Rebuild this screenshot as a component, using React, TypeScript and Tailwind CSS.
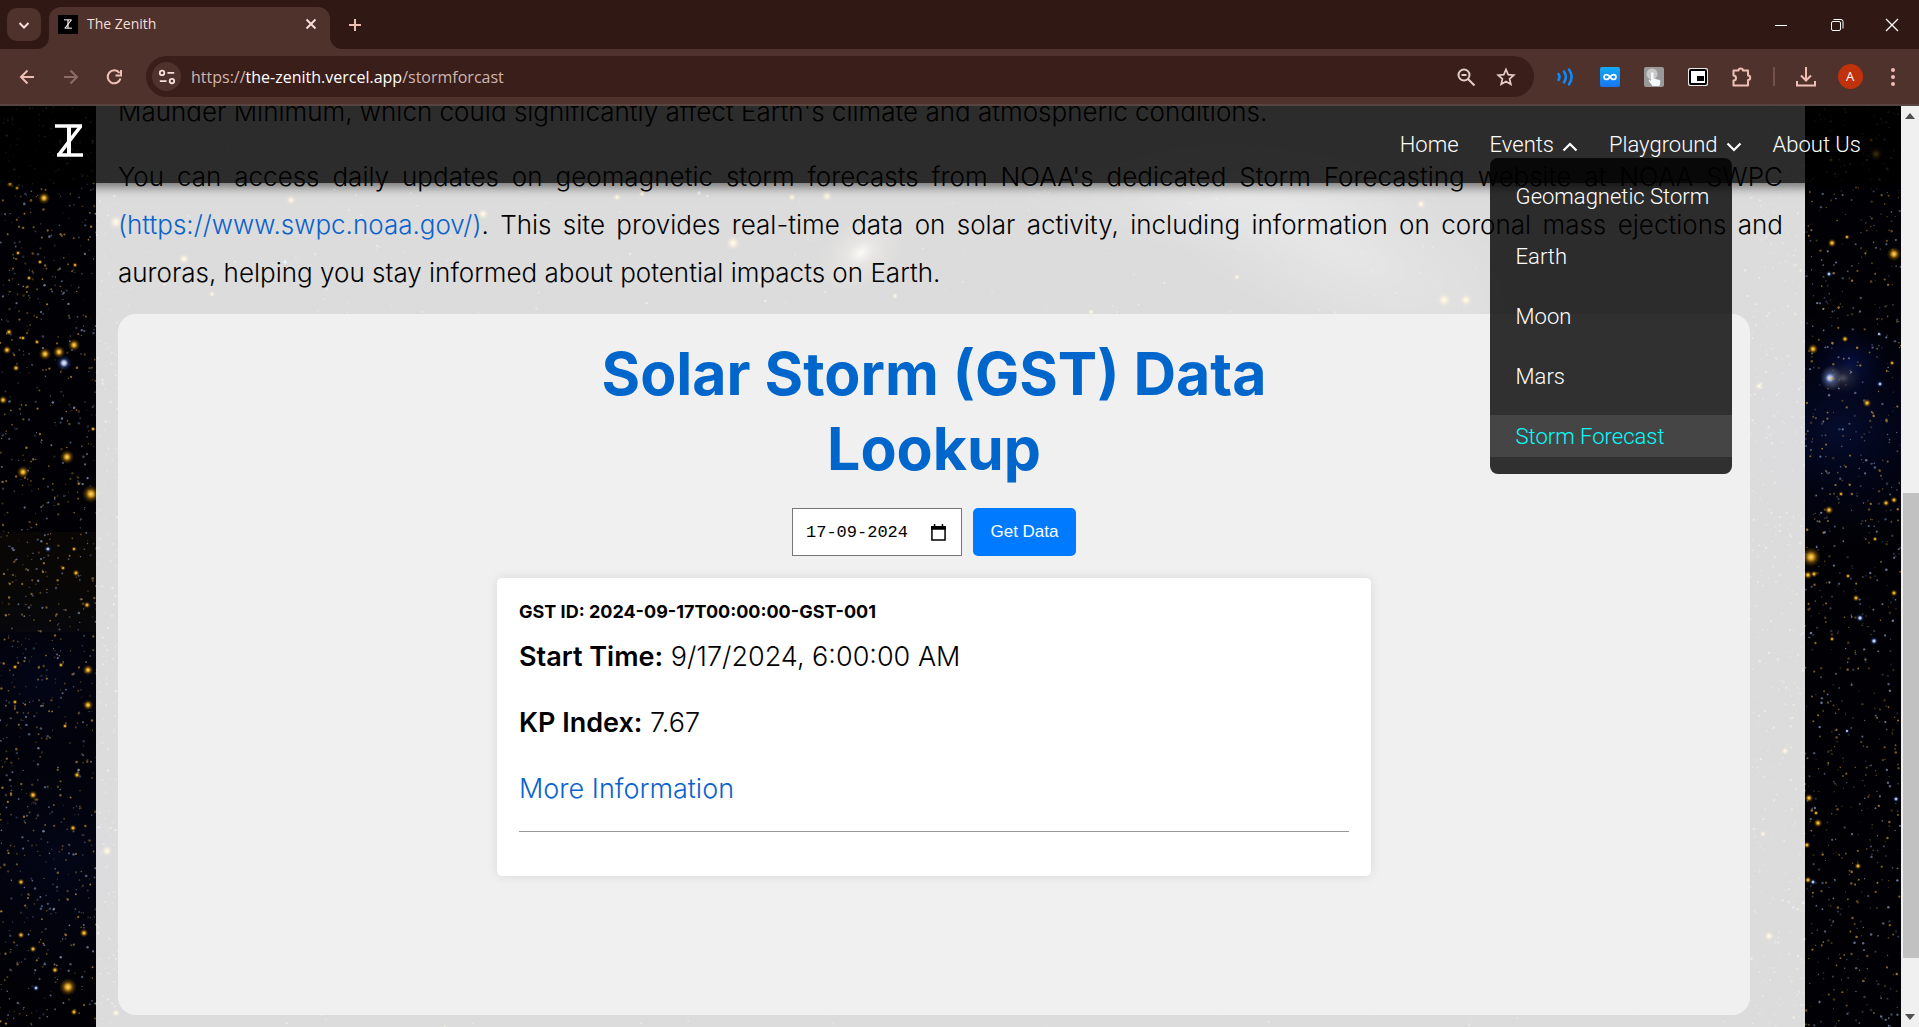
import type { ReactNode } from "react";

type Star = [x: number, y: number, r: number, tint: "gold" | "blue"];

const BRIGHT_STARS: Star[] = [
  [10, 184, 4, "gold"], [17, 188, 3, "gold"], [44, 198, 7, "gold"], [18, 253, 3, "gold"], [40, 262, 3, "gold"],
  [75, 265, 3, "gold"], [29, 278, 3, "gold"], [9, 332, 4, "gold"], [23, 338, 3, "gold"], [37, 342, 3, "gold"],
  [7, 350, 5, "gold"], [45, 354, 7, "gold"], [59, 352, 7, "gold"], [74, 345, 7, "gold"], [64, 363, 9, "blue"],
  [16, 368, 4, "gold"], [3, 400, 5, "gold"], [93, 429, 3, "gold"], [67, 457, 8, "gold"], [23, 472, 7, "gold"],
  [91, 494, 10, "gold"], [48, 549, 4, "blue"], [74, 549, 3, "gold"], [63, 568, 3, "gold"], [76, 573, 4, "gold"],
  [87, 605, 4, "gold"], [15, 667, 3, "gold"], [88, 670, 6, "gold"], [61, 665, 3, "gold"], [15, 702, 3, "gold"],
  [88, 705, 6, "gold"], [65, 726, 3, "gold"], [77, 775, 4, "gold"], [33, 795, 5, "gold"], [73, 828, 4, "gold"],
  [107, 851, 7, "gold"], [21, 882, 4, "gold"], [21, 935, 4, "gold"], [33, 949, 4, "gold"], [84, 933, 5, "gold"],
  [55, 970, 4, "gold"], [68, 987, 10, "gold"], [36, 988, 4, "blue"], [74, 1012, 4, "gold"], [116, 1013, 5, "gold"],
  [116, 222, 9, "gold"], [184, 259, 7, "gold"], [212, 294, 4, "gold"], [291, 200, 6, "gold"], [483, 214, 7, "gold"],
  [285, 262, 4, "blue"], [617, 197, 5, "gold"], [642, 194, 4, "gold"], [792, 197, 5, "gold"], [827, 196, 7, "gold"],
  [733, 243, 9, "gold"], [699, 193, 4, "blue"], [1444, 300, 9, "gold"], [1466, 300, 8, "gold"], [1237, 277, 4, "gold"],
  [1421, 204, 6, "gold"], [760, 281, 5, "gold"], [1091, 312, 4, "gold"], [895, 296, 4, "gold"],
  [1876, 154, 8, "gold"], [1871, 140, 3, "gold"], [1831, 160, 3, "gold"], [1847, 237, 3, "gold"], [1832, 243, 5, "gold"],
  [1894, 254, 8, "gold"], [1829, 274, 4, "blue"], [1845, 339, 4, "gold"], [1813, 349, 6, "gold"], [1892, 363, 3, "gold"],
  [1879, 334, 3, "blue"], [1880, 384, 4, "blue"], [1867, 403, 5, "gold"], [1841, 494, 3, "gold"], [1829, 510, 5, "gold"],
  [1886, 503, 4, "gold"], [1894, 500, 4, "gold"], [1875, 539, 3, "gold"], [1811, 557, 11, "gold"], [1808, 575, 5, "gold"],
  [1814, 574, 4, "gold"], [1848, 576, 3, "gold"], [1894, 593, 4, "gold"], [1856, 598, 4, "gold"], [1860, 618, 5, "blue"],
  [1874, 641, 5, "blue"], [1832, 639, 3, "gold"], [1847, 731, 3, "blue"], [1896, 799, 4, "blue"], [1809, 798, 5, "gold"],
  [1818, 823, 5, "gold"], [1816, 813, 3, "gold"], [1807, 845, 4, "gold"], [1858, 866, 4, "gold"], [1808, 880, 4, "gold"],
  [1813, 882, 4, "blue"], [1785, 751, 5, "gold"], [1763, 834, 4, "gold"], [1769, 936, 6, "gold"], [1759, 386, 5, "gold"],
];

function scatter(count: number, seed: number) {
  let s = seed;
  const next = () => {
    s = (s * 1664525 + 1013904223) % 4294967296;
    return s / 4294967296;
  };
  return Array.from({ length: count }, () => {
    const band = next();
    const x = band < 0.3 ? next() * 118 : band < 0.62 ? 1750 + next() * 151 : next() * 1901;
    const y = 106 + next() * 921;
    return { x, y, r: 0.5 + next() * 0.8, gold: next() > 0.45, o: 0.25 + next() * 0.6 };
  });
}

const FAINT_STARS = scatter(4200, 77);

function Starfield() {
  return (
    <svg className="absolute inset-0 size-full" viewBox="0 106 1901 921" preserveAspectRatio="xMidYMid slice" aria-hidden="true">
      <defs>
        <radialGradient id="gold">
          <stop offset="0" stopColor="#ffe07a" />
          <stop offset="0.3" stopColor="#cf9418" />
          <stop offset="0.6" stopColor="#8a5d08" stopOpacity="0.5" />
          <stop offset="1" stopColor="#5a3c00" stopOpacity="0" />
        </radialGradient>
        <radialGradient id="blue">
          <stop offset="0" stopColor="#ffffff" />
          <stop offset="0.3" stopColor="#95a4cc" />
          <stop offset="0.55" stopColor="#2a4488" stopOpacity="0.5" />
          <stop offset="1" stopColor="#0a1c5a" stopOpacity="0" />
        </radialGradient>
        <radialGradient id="haze">
          <stop offset="0" stopColor="#0a1a60" stopOpacity="0.6" />
          <stop offset="1" stopColor="#000430" stopOpacity="0" />
        </radialGradient>
        <radialGradient id="cloud">
          <stop offset="0" stopColor="#ffffff" stopOpacity="0.5" />
          <stop offset="0.5" stopColor="#d8def0" stopOpacity="0.25" />
          <stop offset="1" stopColor="#9aa6c8" stopOpacity="0" />
        </radialGradient>
        <radialGradient id="warm">
          <stop offset="0" stopColor="#fff4d8" stopOpacity="0.9" />
          <stop offset="0.3" stopColor="#c8b080" stopOpacity="0.4" />
          <stop offset="1" stopColor="#806020" stopOpacity="0" />
        </radialGradient>
      </defs>
      <rect y="106" width="1901" height="921" fill="#010105" />
      <rect y="532" width="130" height="100" fill="#080706" />
      <ellipse cx="40" cy="680" rx="110" ry="100" fill="url(#haze)" opacity="0.35" />
      <ellipse cx="60" cy="860" rx="150" ry="150" fill="url(#haze)" opacity="0.35" />
      <ellipse cx="1840" cy="430" rx="130" ry="120" fill="url(#haze)" opacity="0.75" />
      <ellipse cx="1850" cy="365" rx="40" ry="40" fill="url(#haze)" />
      <ellipse cx="1843" cy="378" rx="20" ry="16" fill="url(#warm)" opacity="0.35" />
      <ellipse cx="1831" cy="378" rx="11" ry="13" fill="url(#cloud)" />
      <circle cx="1830" cy="378" r="9" fill="url(#blue)" />
      <ellipse cx="1340" cy="250" rx="230" ry="90" fill="url(#cloud)" opacity="0.6" transform="rotate(22 1340 250)" />
      <ellipse cx="1230" cy="195" rx="240" ry="60" fill="url(#cloud)" opacity="0.45" />
      <ellipse cx="861" cy="253" rx="50" ry="36" fill="url(#warm)" transform="rotate(-35 861 253)" />
      {FAINT_STARS.map((s, i) => (
        <circle key={i} cx={s.x} cy={s.y} r={s.r} fill={s.gold ? "#b98a3a" : "#7f8fb4"} opacity={s.o} />
      ))}
      {BRIGHT_STARS.map(([x, y, r, tint], i) => (
        <circle key={i} cx={x} cy={y} r={r * 0.9} fill={tint === "gold" ? "url(#gold)" : "url(#blue)"} />
      ))}
    </svg>
  );
}

function ZLogo({ className }: { className: string }) {
  return (
    <svg viewBox="0 0 28 33" className={className} fill="none" stroke="currentColor" aria-hidden="true">
      <path d="M0 2h27M2 31h26" strokeWidth="3.4" />
      <path d="M14 2v29" strokeWidth="4" />
      <path d="M25.5 2.5 4 30.5" strokeWidth="3.6" />
    </svg>
  );
}

function Icon({ children, className = "size-5", width = 2 }: { children: ReactNode; className?: string; width?: number }) {
  return (
    <svg viewBox="0 0 20 20" className={className} fill="none" stroke="currentColor" strokeWidth={width} aria-hidden="true">
      {children}
    </svg>
  );
}

function ToolButton({ label, className = "w-11", children }: { label: string; className?: string; children: ReactNode }) {
  return (
    <button type="button" aria-label={label} className={`flex h-10 shrink-0 items-center justify-center ${className}`}>
      {children}
    </button>
  );
}

function TabStrip() {
  return (
    <div className="flex h-[49px] shrink-0 items-end bg-[#301914] text-[#f6dfd9]">
      <button type="button" aria-label="Search tabs" className="mb-2 ml-[7px] flex h-[33px] w-[34px] items-center justify-center rounded-[10px] bg-[#50322d]">
        <Icon className="size-5"><path d="m5.500 8 4.500 4.500L14.500 8" /></Icon>
      </button>
      <div className="relative ml-2 flex h-[42px] w-[281px] items-center rounded-t-xl bg-[#50322d] px-[9px] pb-2">
        <svg viewBox="0 0 12 12" className="absolute -left-3 bottom-0 size-3 text-[#50322d]" aria-hidden="true"><path d="M12 0v12H0A12 12 0 0 0 12 0" fill="currentColor" /></svg>
        <svg viewBox="0 0 12 12" className="absolute -right-3 bottom-0 size-3 text-[#50322d]" aria-hidden="true"><path d="M0 0v12h12A12 12 0 0 1 0 0" fill="currentColor" /></svg>
        <span className="flex h-[19px] w-5 items-center justify-center bg-black text-white"><ZLogo className="h-[10px] w-2" /></span>
        <span className="ml-[9px] flex-1 text-sm">The Zenith</span>
        <button type="button" aria-label="Close tab" className="flex size-5 items-center justify-center">
          <Icon><path d="m5.500 5.500 9 9m0-9-9 9" /></Icon>
        </button>
      </div>
      <button type="button" aria-label="New tab" className="mb-[14px] ml-[15px] flex size-5 items-center justify-center text-[#f0bfb3]">
        <Icon><path d="M10 4v12M4 10h12" /></Icon>
      </button>
      <div className="ml-auto flex h-full text-white">
        <button type="button" aria-label="Minimize" className="flex w-14 items-center justify-center"><Icon width={1}><path d="M4 10.500h12" /></Icon></button>
        <button type="button" aria-label="Restore" className="flex w-14 items-center justify-center">
          <Icon width={1}><rect x="4.500" y="6.500" width="9" height="9" rx="1.500" /><path d="M6.500 4.500H14a2 2 0 0 1 2 2v7" /></Icon>
        </button>
        <button type="button" aria-label="Close" className="flex w-[54px] items-center justify-center"><Icon width={1.3}><path d="m4 4 12 12m0-12L4 16" /></Icon></button>
      </div>
    </div>
  );
}

function Toolbar() {
  return (
    <div className="flex h-[57px] shrink-0 items-center border-b-2 border-[#5a443f] bg-[#50322d] pl-[5px] pr-[6px] text-[#f0bfb3]">
      <ToolButton label="Back"><Icon><path d="M17 10H4m6.500-6.500L4 10l6.500 6.500" /></Icon></ToolButton>
      <ToolButton label="Forward" className="w-[43px]"><Icon className="size-5 text-[#8f6c65]"><path d="M3 10h13M9.500 3.500 16 10l-6.500 6.500" /></Icon></ToolButton>
      <ToolButton label="Reload"><Icon><path d="M15.500 6A6.500 6.500 0 1 0 16.500 11.500M17 3v5.500h-5.500" /></Icon></ToolButton>
      <div className="ml-[10px] mr-[10px] flex h-[41px] flex-1 items-center rounded-full bg-[#3a1e1a] pl-[6px] pr-2 text-[#e3cdc8]">
        <button type="button" aria-label="View site information" className="flex size-[29px] items-center justify-center rounded-full bg-[#50322d] text-[#f6dfd9]">
          <Icon className="size-[18px]"><circle cx="4.500" cy="5.500" r="2.500" /><path d="M10.500 5.500H18M2 14.500h7.500" /><circle cx="15.500" cy="14.500" r="2.500" /></Icon>
        </button>
        <a href="https://the-zenith.vercel.app/stormforcast" className="ml-[10px] flex-1 text-base text-[#d0b5af]">
          https://<span className="text-white">the-zenith.vercel.app</span>/stormforcast
        </a>
        <ToolButton label="Zoom" className="w-10"><Icon><circle cx="8" cy="8" r="5.500" /><path d="m12 12 6.500 6.500M5.500 8h5" /></Icon></ToolButton>
        <ToolButton label="Bookmark this tab" className="w-10"><Icon width={1.700}><path d="m10 2.500 2.200 5.100 5.600.5-4.200 3.700 1.200 5.500L10 14.400l-4.800 2.900 1.200-5.500-4.200-3.700 5.600-.5z" /></Icon></ToolButton>
      </div>
      <ToolButton label="Read aloud"><Icon className="size-5 text-[#0a8cff]" width={2.500}><path d="M2.500 7q2 3 0 6M8 4.500q3.600 5.500 0 11M13 2.500q5.200 7.500 0 15" strokeLinecap="round" /></Icon></ToolButton>
      <ToolButton label="Infinity extension">
        <span className="flex size-5 items-center justify-center rounded-xs bg-linear-to-b from-[#14aaf5] to-[#1a74f0] text-white"><Icon className="size-[14px]" width={2.400}><path d="M10 10c-2-3-3.500-3.500-5-3.500a3.500 3.500 0 0 0 0 7c1.500 0 3-.5 5-3.500s3.500-3.500 5-3.500a3.500 3.500 0 0 1 0 7c-1.500 0-3-.5-5-3.500" /></Icon></span>
      </ToolButton>
      <ToolButton label="Click extension">
        <svg viewBox="0 0 20 20" className="size-5" aria-hidden="true">
          <rect width="20" height="20" rx="2" fill="#999" />
          <circle cx="8" cy="7" r="5.500" fill="#c9c9c9" />
          <path d="M7 6.500a1.300 1.300 0 0 1 2.600 0v5l5 1.200c1.500.4 1.900 1 1.700 2.300L15.500 19H8.600l-3.800-5c-.5-1 .8-1.700 1.600-.8l.6.700z" fill="#f4f8fd" />
        </svg>
      </ToolButton>
      <ToolButton label="Picture in picture">
        <svg viewBox="0 0 20 18" className="h-[18px] w-5" aria-hidden="true">
          <rect width="20" height="18" rx="2" fill="#e8e8e8" />
          <rect x="2" y="2" width="16" height="14" rx="1" fill="#fff" stroke="#000" strokeWidth="2" />
          <path d="M9 8h7v5H9z" fill="#000" />
        </svg>
      </ToolButton>
      <ToolButton label="Extensions">
        <svg viewBox="0 0 20 20" className="size-5" fill="none" stroke="currentColor" strokeWidth="2" strokeLinejoin="round" aria-hidden="true">
          <path d="M1.500 3.500H6.500a2.200 2 0 0 1 4.400 0H16v5a2.200 2.200 0 0 1 0 4.400v5.600H1.500v-5a2.500 2.500 0 0 0 0-5z" />
        </svg>
      </ToolButton>
      <span className="mx-[9px] h-[19px] w-0.5 bg-[#735049]" />
      <ToolButton label="Downloads"><Icon><path d="M10 0v13M5 8.500l5 5 5-5M1 14v4.500h18V14" /></Icon></ToolButton>
      <ToolButton label="Profile"><span className="flex size-[25px] items-center justify-center rounded-full bg-[#c0320c] text-[13px] text-white">A</span></ToolButton>
      <ToolButton label="Menu" className="w-[41px]">
        <svg viewBox="0 0 4 18" className="h-[18px] w-1" fill="currentColor" aria-hidden="true"><circle cx="2" cy="2" r="2" /><circle cx="2" cy="9" r="2" /><circle cx="2" cy="16" r="2" /></svg>
      </ToolButton>
    </div>
  );
}

const EVENTS = ["Geomagnetic Storm", "Earth", "Moon", "Mars", "Storm Forecast"];

function Chevron({ up = false }: { up?: boolean }) {
  return (
    <svg viewBox="0 0 16 10" className="mt-1 h-[10px] w-4" fill="none" stroke="currentColor" strokeWidth="2.200" aria-hidden="true">
      <path d={up ? "m1.500 8.500 6.500-6.500 6.500 6.500" : "M1.500 1.500 8 8l6.500-6.500"} />
    </svg>
  );
}

function SiteHeader() {
  return (
    <header className="absolute inset-x-0 top-0 z-10 flex h-[77px] items-center justify-between bg-black/80 pl-[55px] pr-10 font-['Roboto',sans-serif] text-[22px] font-light text-white shadow-[0_4px_10px_rgba(0,0,0,0.5)]">
      <a href="#home" aria-label="The Zenith"><ZLogo className="mb-2 h-[33px] w-7" /></a>
      <nav className="flex items-center gap-[31px]">
        <a href="#home">Home</a>
        <div className="relative">
          <button type="button" aria-expanded="true" className="flex items-center gap-2">Events <Chevron up /></button>
          <ul className="absolute left-0 top-[30px] flex w-[242px] flex-col gap-[18px] rounded-lg bg-black/80 py-[17px]">
            {EVENTS.map((item) => (
              <li key={item}>
                <a
                  href="#events"
                  className={`flex h-[42px] items-center whitespace-nowrap px-[26px] ${item === "Storm Forecast" ? "bg-white/10 text-[#00ffff]" : ""}`}
                >
                  {item}
                </a>
              </li>
            ))}
          </ul>
        </div>
        <button type="button" className="flex items-center gap-2">Playground <Chevron /></button>
        <a href="#about">About Us</a>
      </nav>
    </header>
  );
}

function Lookup() {
  return (
    <section className="mr-[33px] flex h-[701px] flex-col items-center rounded-[18px] bg-[#f0f0f0] pt-[22px]">
      <div className="flex w-[874px] max-w-full flex-col items-center">
        <h1 className="w-[700px] text-center text-[59px] font-bold leading-[75px] text-[#0066cc]">Solar Storm (GST) Data Lookup</h1>
        <form className="mt-[22px] flex gap-[11px]">
          <label className="flex h-12 w-[170px] items-center border border-[#767676] bg-white pl-[13px] pr-[15px]">
            <span className="sr-only">Date</span>
            <input type="text" defaultValue="17-09-2024" className="min-w-0 flex-1 pt-0.5 font-['Liberation_Mono',monospace] text-[17px] outline-none" />
            <svg viewBox="0 0 16 18" className="h-[17px] w-[15px]" aria-hidden="true"><path d="M1 3h14v14H1z" fill="none" stroke="#000" strokeWidth="1.600" /><path d="M0 2h16v4H0zM3 0h1.600v3H3zM11.400 0H13v3h-1.600z" /></svg>
          </label>
          <button type="button" className="h-12 w-[103px] rounded-[5px] bg-[#007bff] font-['Liberation_Sans',sans-serif] text-[17px] text-white">Get Data</button>
        </form>
        <article className="mt-[22px] h-[298px] w-full rounded-[5px] bg-white px-[22px] pt-[18px] text-[27px] font-light leading-[48px] shadow-[0_0_11px_rgba(0,0,0,0.1)]">
          <h2 className="text-[18px] font-bold leading-8">GST ID: 2024-09-17T00:00:00-GST-001</h2>
          <p className="mt-[5px]"><strong className="font-semibold">Start Time:</strong> 9/17/2024, 6:00:00 AM</p>
          <p className="mt-[18px]"><strong className="font-semibold">KP Index:</strong> 7.67</p>
          <p className="mt-[18px]"><a href="#more" className="text-[#0a62cc]">More Information</a></p>
          <hr className="mt-[18px] border-[#999]" />
        </article>
      </div>
    </section>
  );
}

export default function App() {
  return (
    <div className="flex h-screen flex-col overflow-hidden bg-black font-['Open_Sans',sans-serif]">
      <TabStrip />
      <Toolbar />
      <div className="flex min-h-0 flex-1">
        <div className="relative min-w-0 flex-1 overflow-hidden">
          <Starfield />
          <SiteHeader />
          <main className="relative mx-24 h-full overflow-hidden bg-[#ffffffdc] px-[22px] font-['Inter',sans-serif] text-black">
            <div className="-mt-[18px] text-justify text-[26px] font-[350] leading-[48px]">
              <p>Maunder Minimum, which could significantly affect Earth's climate and atmospheric conditions.</p>
              <p className="mb-[17px] mt-[17px]">
                You can access daily updates on geomagnetic storm forecasts from NOAA's dedicated Storm Forecasting website at NOAA SWPC{" "}
                <a href="https://www.swpc.noaa.gov/" className="text-[#0a62cc]">(https://www.swpc.noaa.gov/)</a>. This site provides real-time data on
                solar activity, including information on coronal mass ejections and auroras, helping you stay informed about potential impacts on Earth.
              </p>
            </div>
            <Lookup />
          </main>
        </div>
        <div className="flex w-[18px] shrink-0 flex-col items-center bg-[#f0f0f0]" aria-hidden="true">
          <svg viewBox="0 0 10 6" className="mt-[7px] h-[6px] w-[10px] shrink-0" fill="#505050"><path d="M0 6 5 0l5 6z" /></svg>
          <div className="w-4 flex-[374]" />
          <div className="w-4 flex-[466] self-end bg-[#c1c1c1]" />
          <div className="flex-[56]" />
          <svg viewBox="0 0 10 6" className="mb-[7px] h-[6px] w-[10px] shrink-0" fill="#505050"><path d="M0 0h10L5 6z" /></svg>
        </div>
      </div>
    </div>
  );
}
